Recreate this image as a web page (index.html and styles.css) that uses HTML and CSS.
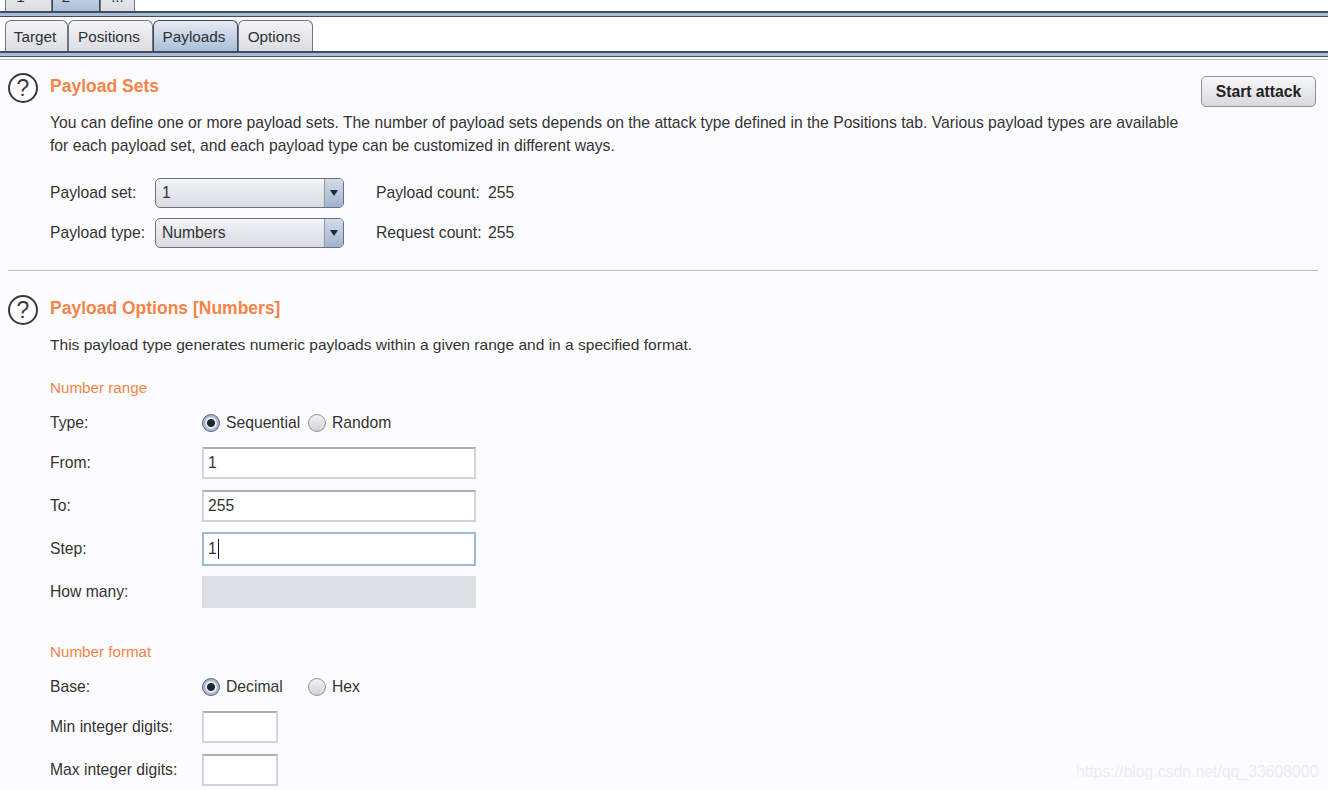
FILE: index.html
```html
<!DOCTYPE html>
<html lang="en">
<head>
    <meta charset="UTF-8">
    <meta name="viewport" content="width=device-width, initial-scale=1.0">
    <title>Payloads</title>
    <link rel="stylesheet" href="styles.css">
</head>
<body>
    <!-- top tabs, cut off by the window -->
    <div class="top-tabs">
        <div class="tab top-tab first">1</div>
        <div class="tab top-tab second active">2</div>
        <div class="tab top-tab third">...</div>
    </div>
    <div class="bar-line"></div>

    <div class="sub-tabs">
        <div class="tab tab-target">Target</div>
        <div class="tab tab-positions">Positions</div>
        <div class="tab tab-payloads active">Payloads</div>
        <div class="tab tab-options">Options</div>
    </div>
    <div class="bar-line"></div>
    <div class="bar-thin"></div>

    <div class="section section-sets">
        <div class="help">?</div>
        <div class="section-body">
            <h2>Payload Sets</h2>
            <p class="intro">You can define one or more payload sets. The number of payload sets depends on the attack type defined in the Positions tab. Various payload types are available<br>for each payload set, and each payload type can be customized in different ways.</p>
            <div class="set-row first-set">
                <span class="set-label">Payload set:</span>
                <div class="combo"><span class="combo-value">1</span><span class="combo-arrow"></span></div>
                <span class="count-label">Payload count:</span><span>255</span>
            </div>
            <div class="set-row">
                <span class="set-label">Payload type:</span>
                <div class="combo"><span class="combo-value">Numbers</span><span class="combo-arrow"></span></div>
                <span class="count-label">Request count:</span><span>255</span>
            </div>
        </div>
        <button class="start-btn">Start attack</button>
    </div>

    <hr class="divider">

    <div class="section section-options">
        <div class="help">?</div>
        <div class="section-body">
            <h2>Payload Options [Numbers]</h2>
            <p class="intro intro-small">This payload type generates numeric payloads within a given range and in a specified format.</p>

            <h3 class="range-title">Number range</h3>
            <div class="form-row radio-row">
                <span class="form-label">Type:</span>
                <span class="radio checked"></span><span class="radio-text seq">Sequential</span>
                <span class="radio"></span><span class="radio-text">Random</span>
            </div>
            <div class="form-row input-row">
                <span class="form-label">From:</span>
                <div class="text-box">1</div>
            </div>
            <div class="form-row input-row">
                <span class="form-label">To:</span>
                <div class="text-box">255</div>
            </div>
            <div class="form-row input-row tight">
                <span class="form-label">Step:</span>
                <div class="text-box focused">1<span class="caret"></span></div>
            </div>
            <div class="form-row input-row tight">
                <span class="form-label">How many:</span>
                <div class="text-box disabled"></div>
            </div>

            <h3 class="format-title">Number format</h3>
            <div class="form-row radio-row">
                <span class="form-label">Base:</span>
                <span class="radio checked"></span><span class="radio-text dec">Decimal</span>
                <span class="radio"></span><span class="radio-text">Hex</span>
            </div>
            <div class="form-row input-row digits-first">
                <span class="form-label">Min integer digits:</span>
                <div class="text-box small"></div>
            </div>
            <div class="form-row input-row digits-second">
                <span class="form-label">Max integer digits:</span>
                <div class="text-box small"></div>
            </div>
        </div>
    </div>

    <div class="watermark">https://blog.csdn.net/qq_33608000</div>
</body>
</html>
```

FILE: styles.css
```css
* {
    box-sizing: border-box;
}

html, body {
    margin: 0;
    height: 790px;
    overflow: hidden;
}

body {
    position: relative;
    background: #fcfcfe;
    color: #333;
    font-family: "Liberation Sans", Arial, sans-serif;
    font-size: 15.7px;
}

/* tabs */
.top-tabs {
    display: flex;
    align-items: flex-end;
    height: 11px;
    padding-left: 5px;
    overflow: hidden;
    background: #fff;
}

.sub-tabs {
    display: flex;
    align-items: flex-end;
    height: 31px;
    margin-top: 3px;
    padding-left: 5px;
    background: #fff;
}

.tab {
    flex: none;
    height: 31px;
    padding: 7px 3px 0 0;
    font-size: 15.3px;
    text-align: center;
    border: 1px solid #6c7686;
    border-bottom: none;
    border-radius: 6px 6px 0 0;
    background: linear-gradient(#f4f4f6, #dcdde2);
    color: #2e3036;
}

.tab.active {
    background: linear-gradient(#e6eaf0, #a9bfd8);
    border-color: #3c4658;
}

.top-tab.first { width: 47px; padding-right: 16px; }
.top-tab.second { width: 48px; padding-right: 20px; }
.top-tab.third { width: 35px; padding-right: 0; }

.tab-target { width: 63px; }
.tab-positions { width: 85px; }
.tab-payloads { width: 85px; }
.tab-options { width: 75px; }

.bar-line {
    height: 6px;
    border-top: 2px solid #434c5e;
    border-bottom: 1px solid #434c5e;
    background: #a9bdd8;
}

.bar-thin {
    height: 3px;
    border-bottom: 1px solid #b4b6ba;
    background: #fff;
}

/* sections */
.section {
    display: flex;
    padding-left: 8px;
}

.section-sets {
    padding-top: 13px;
    padding-right: 12px;
}

.section-options {
    padding-top: 24px;
}

.section-body {
    flex: 1;
    margin-left: 12px;
}

.help {
    flex: none;
    width: 30px;
    height: 30px;
    border: 2px solid #3a3a3a;
    border-radius: 50%;
    font-size: 23px;
    line-height: 26px;
    text-align: center;
    color: #3a3a3a;
    background: #fff;
}

h2 {
    margin: 0;
    height: 26px;
    font-size: 17.5px;
    line-height: 26px;
    color: #f58446;
}

h3 {
    margin: 0;
    font-size: 15.2px;
    font-weight: normal;
    line-height: 20px;
    color: #f58446;
}

.intro {
    margin: 13px 0 0;
    line-height: 22.5px;
}

.intro-small {
    font-size: 15.55px;
}

.start-btn {
    flex: none;
    align-self: flex-start;
    width: 115px;
    height: 31px;
    margin-top: 3px;
    font-family: inherit;
    font-size: 15.7px;
    font-weight: bold;
    color: #222;
    border: 1px solid #8e939b;
    border-radius: 5px;
    background: linear-gradient(#f8f8fa, #d8d9de);
}

/* payload set rows */
.set-row {
    display: flex;
    align-items: center;
    height: 30px;
    margin-top: 10px;
}

.set-row.first-set {
    margin-top: 21px;
}

.set-label {
    width: 105px;
}

.combo {
    display: flex;
    width: 189px;
    height: 30px;
    border: 1px solid #687080;
    border-radius: 5px;
    overflow: hidden;
    background: linear-gradient(#f3f4f7, #d8dae2);
}

.combo-value {
    flex: 1;
    padding-left: 6px;
    line-height: 27px;
}

.combo-arrow {
    position: relative;
    width: 19px;
    border-left: 1px solid #8d99ab;
    background: linear-gradient(#d3dce8, #9fb4cf);
}

.combo-arrow:after {
    content: "";
    position: absolute;
    top: 11px;
    left: 5px;
    border-left: 4px solid transparent;
    border-right: 4px solid transparent;
    border-top: 6px solid #222a38;
}

.count-label {
    margin-left: 32px;
    width: 112px;
}

.divider {
    height: 1px;
    margin: 22px 10px 0 8px;
    border: none;
    background: #bdbdbd;
}

/* number form */
.range-title {
    margin-top: 21px;
}

.format-title {
    margin-top: 34px;
}

.form-row {
    display: flex;
    align-items: center;
}

.form-label {
    width: 152px;
}

.radio-row {
    height: 20px;
    margin-top: 15px;
}

.input-row {
    margin-top: 11px;
}

.input-row.tight {
    margin-top: 10px;
}

.radio-row + .input-row {
    margin-top: 14px;
}

.digits-first {
    margin-top: 14px;
}

.digits-second {
    margin-top: 11px;
}

.radio {
    flex: none;
    width: 18px;
    height: 18px;
    border: 1px solid #8d939e;
    border-radius: 50%;
    background: linear-gradient(#f2f2f4, #d0d2d8);
}

.radio.checked {
    border-color: #59667a;
    background: radial-gradient(circle at center, #20242c 0, #20242c 3.5px, #eef1f5 4.5px, #eef1f5 5px, #a8b8cf 6.5px);
}

.radio-text {
    margin-left: 6px;
}

.radio-text.seq {
    width: 82px;
}

.radio-text.dec {
    width: 82px;
}

.text-box {
    width: 274px;
    height: 32px;
    padding-left: 4px;
    line-height: 28px;
    border: 2px solid #d2d3d5;
    border-top-color: #adaeb0;
    background: #fff;
}

.text-box.focused {
    height: 34px;
    line-height: 30px;
    border-color: #9db9d8;
}

.text-box.disabled {
    border: none;
    background: #dcdfe4;
}

.text-box.small {
    width: 76px;
}

.caret {
    display: inline-block;
    width: 1px;
    height: 20px;
    margin-left: 1px;
    vertical-align: middle;
    background: #111;
}

.watermark {
    position: absolute;
    left: 1076px;
    top: 763px;
    font-size: 15.8px;
    color: #ecedf0;
}
```
